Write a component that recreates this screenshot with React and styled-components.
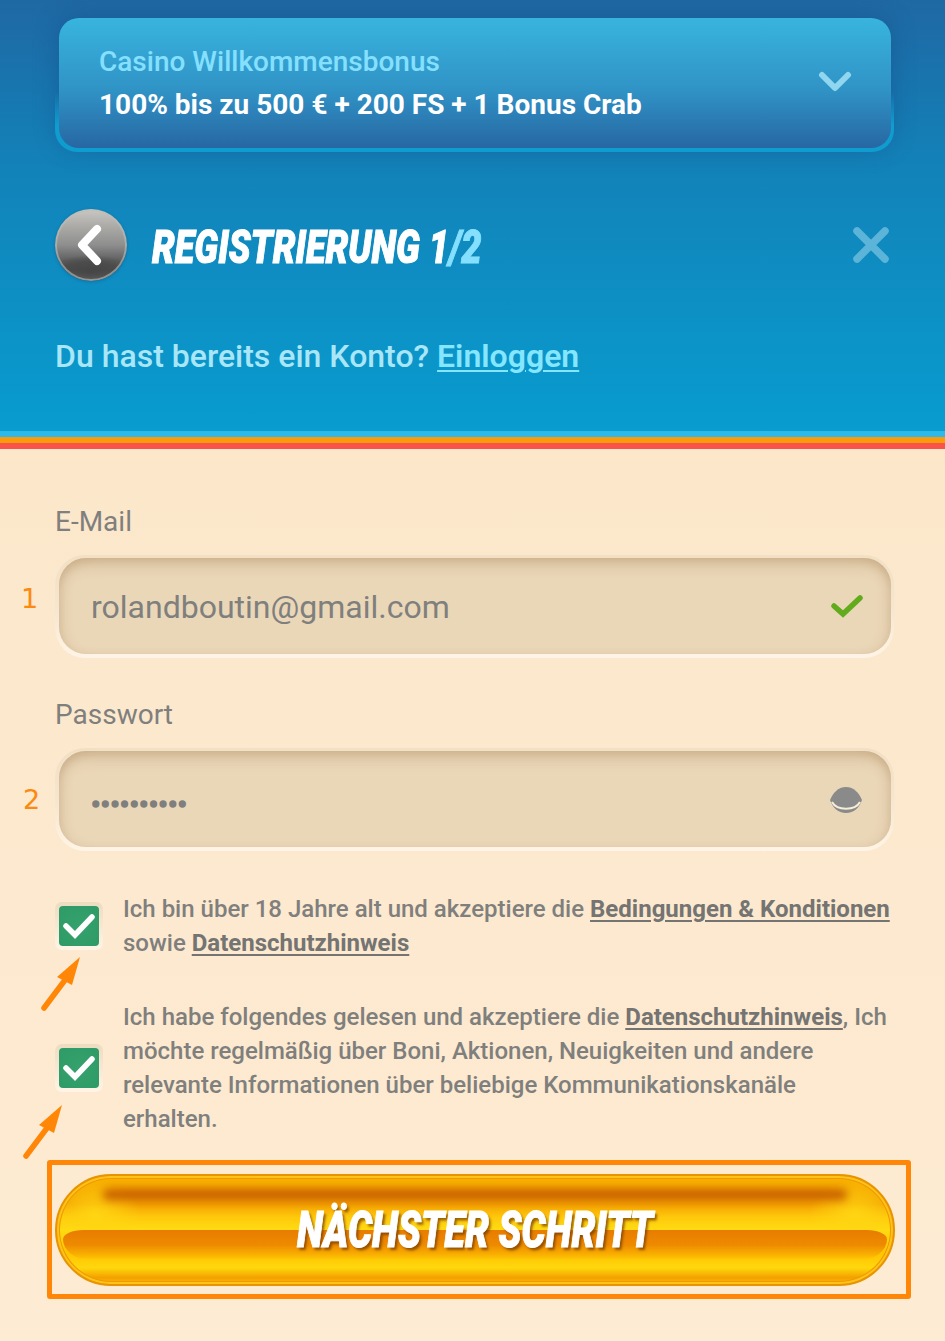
import styled, { createGlobalStyle } from 'styled-components';

const GlobalStyle = createGlobalStyle`
	html, body {
		margin: 0;
		padding: 0;
	}

	body {
		font-family: Roboto, 'Liberation Sans', sans-serif;
		background: #fdebd4;
	}
`;

const Page = styled.div`
	width: 945px;
	height: 1341px;
	overflow: hidden;
	background: linear-gradient(180deg, #fbe5c6 0%, #fdebd3 100%);
`;

const Header = styled.header`
	height: 431px;
	box-sizing: border-box;
	padding: 18px 51px 0 55px;
	background: linear-gradient(180deg, #1f68a4 0%, #1283b9 40%, #089ccf 100%);
`;

const BonusCard = styled.div`
	position: relative;
	isolation: isolate;
	box-sizing: border-box;
	height: 130px;
	margin: 0 3px 0 4px;
	padding: 26px 40px 0;
	display: flex;
	align-items: flex-start;
	justify-content: space-between;
	border-radius: 20px;
	box-shadow: 0 0 24px rgba(20, 70, 130, 0.45);

	&::before {
		content: '';
		position: absolute;
		z-index: -1;
		left: -4px;
		right: -3px;
		bottom: -4px;
		height: 60px;
		border-radius: 0 0 22px 22px;
		background: linear-gradient(180deg, rgba(15, 156, 207, 0) 0%, #0f9ccf 55%);
	}

	&::after {
		content: '';
		position: absolute;
		z-index: -1;
		inset: 0;
		border-radius: 20px;
		background: linear-gradient(180deg, #38b4df 0%, #3093c6 55%, #2767a3 100%);
	}
`;

const BonusLabel = styled.div`
	font-size: 28px;
	line-height: 36px;
	font-weight: 500;
	color: #85e0ff;
`;

const BonusValue = styled.div`
	margin-top: 7px;
	font-size: 28px;
	line-height: 36px;
	font-weight: 700;
	color: #fff;
`;

const ChevronDown = styled.svg`
	width: 34px;
	height: 24px;
	margin: 26px -1px 0 0;
`;

const TitleRow = styled.div`
	display: flex;
	align-items: center;
	margin-top: 61px;
	height: 72px;
`;

const BackButton = styled.button`
	width: 72px;
	height: 72px;
	flex: none;
	padding: 0;
	border: 0;
	border-radius: 50%;
	display: flex;
	align-items: center;
	justify-content: center;
	background:
		radial-gradient(ellipse 60% 22% at 50% 86%, #454545 0%, rgba(70, 70, 70, 0.7) 60%, rgba(70, 70, 70, 0) 100%),
		linear-gradient(180deg, #c9c8c3 0%, #aaa9a6 25%, #8e8e8e 50%, #5e5e5e 72%, #555 85%, #9a9a9a 100%);
	box-shadow: inset 0 0 0 2px rgba(190, 190, 185, 0.6), 0 1px 3px rgba(20, 60, 110, 0.35);
`;

const Title = styled.h1`
	margin: 3px 0 0 25px;
	font-size: 46px;
	line-height: 50px;
	font-weight: 900;
	font-style: italic;
	color: #fff;
	white-space: nowrap;
	-webkit-text-stroke: 1px currentColor;
	transform: scaleX(0.783);
	transform-origin: left center;

	span {
		color: #85e0ff;
	}
`;

const CloseIcon = styled.svg`
	width: 36px;
	height: 36px;
	margin: 0 5px 0 auto;
`;

const LoginLine = styled.p`
	margin: 55px 0 0;
	font-size: 32px;
	line-height: 40px;
	font-weight: 500;
	color: #a8e6f8;

	a {
		color: #85e6ff;
		font-weight: 600;
		text-decoration: underline;
		text-decoration-thickness: 2px;
		text-underline-offset: 3px;
	}
`;

const Stripe = styled.div`
	height: 6px;
	background: ${(p) => p.$color};
`;

const Form = styled.form`
	position: relative;
	padding: 57px 51px 0 55px;
`;

const Field = styled.div`
	position: relative;
	margin-bottom: ${(p) => p.$gap}px;
`;

const Label = styled.label`
	display: block;
	font-size: 28px;
	line-height: 32px;
	color: #7f7f7d;
	margin-bottom: 17px;
`;

const InputShell = styled.div`
	box-sizing: border-box;
	height: 103px;
	padding: 3px 3px 4px 4px;
	border-radius: 30px;
	background: linear-gradient(180deg, #f1e0c4 0%, #f6e6cf 50%, #fff4e6 100%);
`;

const InputBody = styled.div`
	height: 100%;
	box-sizing: border-box;
	padding: 2px 28px 0 32px;
	display: flex;
	align-items: center;
	justify-content: space-between;
	border-radius: 27px;
	background: #ead7b8;
	box-shadow: inset 0 12px 14px -6px rgba(170, 130, 85, 0.42), inset 8px 0 12px -6px rgba(170, 130, 85, 0.28), inset -8px 0 12px -6px rgba(170, 130, 85, 0.28);
	font-size: 32px;
	color: #7f7f7d;
`;

const Dots = styled.span`
	font-size: 28.5px;
	line-height: 1;
	margin-top: 10px;
	-webkit-text-stroke: 1.5px currentColor;
`;

const StepNumber = styled.span`
	position: absolute;
	left: ${(p) => p.$left}px;
	top: ${(p) => p.$top}px;
	font-family: 'DejaVu Sans', sans-serif;
	font-size: 27px;
	line-height: 30px;
	color: #fb8a10;
`;

const Consent = styled.div`
	display: flex;
	align-items: center;
	gap: 20px;
	margin-bottom: ${(p) => p.$gap}px;
`;

const CheckFrame = styled.div`
	width: 48px;
	height: 48px;
	flex: none;
	box-sizing: border-box;
	padding: 4px;
	border-radius: 7px;
	background: linear-gradient(180deg, #ecdcc0 0%, #fff4e6 100%);
`;

const CheckBox = styled.div`
	width: 40px;
	height: 40px;
	border-radius: 4px;
	display: flex;
	align-items: center;
	justify-content: center;
	background: radial-gradient(circle at 50% 50%, #35a26d 0%, #2e9a65 100%);
`;

const ConsentText = styled.p`
	margin: 0;
	font-size: 24px;
	line-height: 34px;
	font-weight: 500;
	color: #7f7f7d;

	a {
		color: #747472;
		font-weight: 700;
		text-decoration: underline;
		text-underline-offset: 3px;
	}
`;

const Arrow = styled.svg`
	position: absolute;
	left: ${(p) => p.$left}px;
	top: ${(p) => p.$top}px;
	width: 60px;
	height: 60px;
`;

const SubmitButton = styled.button`
	position: relative;
	display: block;
	width: 840px;
	height: 112px;
	padding: 0;
	overflow: hidden;
	border: 2px solid #e79400;
	border-radius: 56px;
	background:
		radial-gradient(ellipse 46px 36px at 38px 40px, #ffd512 0%, rgba(255, 213, 18, 0) 100%),
		radial-gradient(ellipse 46px 36px at calc(100% - 38px) 40px, #ffd512 0%, rgba(255, 213, 18, 0) 100%),
		linear-gradient(180deg, #f9b400 0%, #f6a900 12%, #f3a000 26%, #ffc80c 38%, #ffdc12 50%, #ffd80f 52%, #ffc400 72%, #ffd70c 85%, #f3a100 94%, #ffb800 100%);
	box-shadow: inset 0 0 0 2px #ffc21a, inset 0 0 0 3px #ee9a00;

	&::before {
		content: '';
		position: absolute;
		left: 46px;
		right: 46px;
		top: 13px;
		height: 11px;
		border-radius: 6px;
		background: #c85f00;
		filter: blur(4px);
	}

	&::after {
		content: '';
		position: absolute;
		left: 6px;
		right: 6px;
		top: 54px;
		height: 30px;
		border-radius: 30px 30px 40px 40px / 14px 14px 30px 30px;
		background: linear-gradient(180deg, #e87c00 0%, #ee8a00 50%, rgba(245, 160, 0, 0) 100%);
	}
`;

const SubmitLabel = styled.span`
	position: relative;
	z-index: 1;
	display: block;
	font-family: Roboto, sans-serif;
	font-size: 50px;
	line-height: 56px;
	font-weight: 900;
	font-style: italic;
	color: #fff;
	white-space: nowrap;
	-webkit-text-stroke: 1px currentColor;
	transform: scaleX(0.76);
	text-shadow: 3px 3px 3px rgba(120, 60, 0, 0.75);
`;

const Highlight = styled.div`
	position: absolute;
	left: 47px;
	top: 1160px;
	width: 864px;
	height: 139px;
	box-sizing: border-box;
	border: 5px solid #ff8606;
	border-radius: 3px;
	pointer-events: none;
`;

const Screen = styled.div`
	position: relative;
`;

const OrangeArrow = ({ left, top }) => (
	<Arrow $left={left} $top={top} viewBox="0 0 60 60">
		<path d="M4 53 L25 25" stroke="#ff8606" strokeWidth="5.5" strokeLinecap="round" fill="none" />
		<path d="M40 2 L17 22 L32 30 Z" fill="#ff8606" />
	</Arrow>
);

const Tick = () => (
	<svg width="32" height="26" viewBox="0 0 32 26">
		<path d="M3 13 L12 22 L29 4" stroke="#fff" strokeWidth="5.5" strokeLinecap="round" strokeLinejoin="miter" fill="none" />
	</svg>
);

export default function App() {
	return (
		<Screen>
			<GlobalStyle />
			<Page>
				<Header>
					<BonusCard>
						<div>
							<BonusLabel>Casino Willkommensbonus</BonusLabel>
							<BonusValue>100% bis zu 500 € + 200 FS + 1 Bonus Crab</BonusValue>
						</div>
						<ChevronDown viewBox="0 0 34 24">
							<path d="M4 5 L17 18 L30 5" stroke="#8fd6ee" strokeWidth="6" strokeLinecap="round" strokeLinejoin="round" fill="none" />
						</ChevronDown>
					</BonusCard>
					<TitleRow>
						<BackButton type="button" aria-label="Zurück">
							<svg width="40" height="44" viewBox="0 0 40 44">
								<path d="M26 6 L11 22 L26 38" stroke="#fff" strokeWidth="8" strokeLinecap="round" strokeLinejoin="round" fill="none" />
							</svg>
						</BackButton>
						<Title>
							REGISTRIERUNG 1<span>/2</span>
						</Title>
						<CloseIcon viewBox="0 0 36 36">
							<path d="M4 4 L32 32 M32 4 L4 32" stroke="#5cb4d8" strokeWidth="7.5" strokeLinecap="round" fill="none" />
						</CloseIcon>
					</TitleRow>
					<LoginLine>
						Du hast bereits ein Konto? <a href="#login">Einloggen</a>
					</LoginLine>
				</Header>
				<Stripe $color="#2db9ec" />
				<Stripe $color="#fb9a0a" />
				<Stripe $color="#f9534a" />
				<Form>
					<Field $gap={41}>
						<Label>E-Mail</Label>
						<StepNumber $left={-34} $top={78}>1</StepNumber>
						<InputShell>
							<InputBody>
								rolandboutin@gmail.com
								<svg width="34" height="28" viewBox="0 0 34 28">
									<path d="M5 13 L14 21 L31 5" stroke="#62ab1d" strokeWidth="5.5" strokeLinecap="round" fill="none" />
								</svg>
							</InputBody>
						</InputShell>
					</Field>
					<Field $gap={41}>
						<Label>Passwort</Label>
						<StepNumber $left={-32} $top={86}>2</StepNumber>
						<InputShell>
							<InputBody>
								<Dots>••••••••••</Dots>
								<svg width="34" height="30" viewBox="0 0 34 30">
									<path d="M17 2 C25 2 30 8 33 15 C30 23 25 28 17 28 C9 28 4 23 1 15 C4 8 9 2 17 2 Z" fill="#8a8a8a" />
									<path d="M3 17 C8 26 26 26 31 17" stroke="#f7edd9" strokeWidth="2" fill="none" />
								</svg>
							</InputBody>
						</InputShell>
					</Field>
					<Consent $gap={40}>
						<CheckFrame>
							<CheckBox><Tick /></CheckBox>
						</CheckFrame>
						<ConsentText>
							Ich bin über 18 Jahre alt und akzeptiere die <a href="#terms">Bedingungen &amp; Konditionen</a> sowie <a href="#privacy">Datenschutzhinweis</a>
						</ConsentText>
					</Consent>
					<Consent $gap={38}>
						<CheckFrame>
							<CheckBox><Tick /></CheckBox>
						</CheckFrame>
						<ConsentText>
							Ich habe folgendes gelesen und akzeptiere die <a href="#privacy">Datenschutzhinweis</a>, Ich möchte regelmäßig über Boni, Aktionen, Neuigkeiten und andere relevante Informationen über beliebige Kommunikationskanäle erhalten.
						</ConsentText>
					</Consent>
					<SubmitButton type="button">
						<SubmitLabel>NÄCHSTER SCHRITT</SubmitLabel>
					</SubmitButton>
				</Form>
			</Page>
			<OrangeArrow left={40} top={955} />
			<OrangeArrow left={22} top={1103} />
			<Highlight />
		</Screen>
	);
}
